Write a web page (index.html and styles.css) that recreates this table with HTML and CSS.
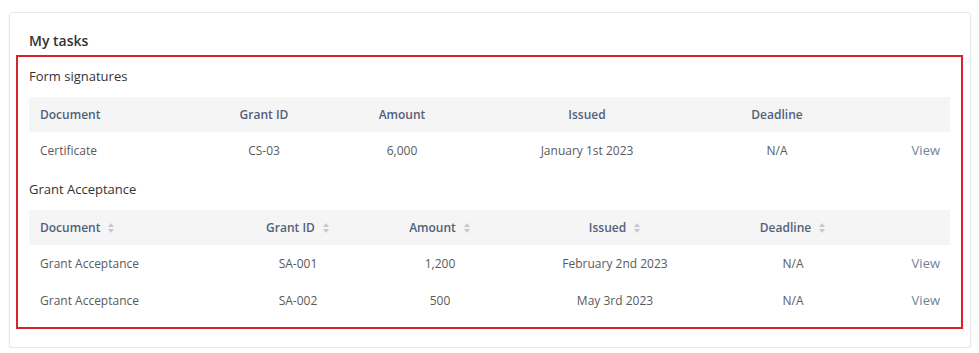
FILE: index.html
```html
<!DOCTYPE html>
<html>
<head>
<meta charset="utf-8">
<link rel="stylesheet" href="styles.css">
</head>
<body>
<div class="card">
  <h2 class="card-title">My tasks</h2>
  <div class="highlight">
    <h3 class="section-title">Form signatures</h3>
    <table class="tasks">
      <colgroup>
        <col style="width:171px"><col style="width:128px"><col style="width:148px"><col style="width:222px"><col style="width:158px"><col style="width:94px">
      </colgroup>
      <thead>
        <tr><th class="left">Document</th><th>Grant ID</th><th>Amount</th><th>Issued</th><th>Deadline</th><th></th></tr>
      </thead>
      <tbody>
        <tr><td class="left">Certificate</td><td>CS-03</td><td>6,000</td><td>January 1st 2023</td><td>N/A</td><td class="right"><a class="view">View</a></td></tr>
      </tbody>
    </table>
    <h3 class="section-title">Grant Acceptance</h3>
    <table class="tasks">
      <colgroup>
        <col style="width:201px"><col style="width:136px"><col style="width:148px"><col style="width:202px"><col style="width:154px"><col style="width:80px">
      </colgroup>
      <thead>
        <tr>
          <th class="left">Document<span class="sort"></span></th>
          <th>Grant ID<span class="sort"></span></th>
          <th>Amount<span class="sort"></span></th>
          <th>Issued<span class="sort"></span></th>
          <th>Deadline<span class="sort"></span></th>
          <th></th>
        </tr>
      </thead>
      <tbody>
        <tr><td class="left">Grant Acceptance</td><td>SA-001</td><td>1,200</td><td>February 2nd 2023</td><td>N/A</td><td class="right"><a class="view">View</a></td></tr>
        <tr><td class="left">Grant Acceptance</td><td>SA-002</td><td>500</td><td>May 3rd 2023</td><td>N/A</td><td class="right"><a class="view">View</a></td></tr>
      </tbody>
    </table>
  </div>
</div>
</body>
</html>
```
FILE: styles.css
```css
* { box-sizing: border-box; }
body {
  margin: 0;
  padding: 12px 9px 0 9px;
  background: #ffffff;
  font-family: "Open Sans", "Liberation Sans", sans-serif;
  color: #555;
}
.card {
  width: 962px;
  height: 336px;
  border: 1px solid #e9e9e9;
  border-radius: 4px;
  box-shadow: 0 1px 2px rgba(0,0,0,0.07);
  padding: 18px 6px 0 6px;
  background: #fff;
}
.card-title {
  margin: 0 0 4px 0;
  padding-left: 13px;
  font-size: 14px;
  line-height: 20px;
  font-weight: 600;
  color: #333;
}
.highlight {
  border: 2px solid #d9232b;
  width: 947px;
  padding: 9px 11px 8px 11px;
}
.section-title {
  margin: 0 0 11px 0;
  font-size: 13px;
  line-height: 20px;
  font-weight: 400;
  color: #333;
}
.tasks + .section-title { margin-top: 10px; }
.tasks {
  width: 921px;
  table-layout: fixed;
  border-collapse: collapse;
  font-size: 12px;
}
.tasks th {
  height: 35px;
  padding: 0;
  background: #f5f5f6;
  color: #52617a;
  font-weight: 600;
  text-align: center;
  white-space: nowrap;
}
.tasks td {
  height: 37px;
  padding: 0;
  color: #5a5a5a;
  text-align: center;
  vertical-align: middle;
  white-space: nowrap;
}
.tasks .left { text-align: left; padding-left: 11px; }
.tasks .right { text-align: right; padding-right: 10px; }
.view {
  display: block;
  color: #6e849b;
  font-size: 13px;
  line-height: 15px;
  text-decoration: none;
}
.sort {
  display: inline-block;
  position: relative;
  width: 7px;
  height: 10px;
  margin-left: 8px;
  vertical-align: -1px;
}
.sort::before, .sort::after {
  content: "";
  position: absolute;
  left: 0;
  border-left: 3.5px solid transparent;
  border-right: 3.5px solid transparent;
}
.sort::before { top: 0; border-bottom: 4px solid #c5c9cf; }
.sort::after { bottom: 0; border-top: 4px solid #c5c9cf; }
```
